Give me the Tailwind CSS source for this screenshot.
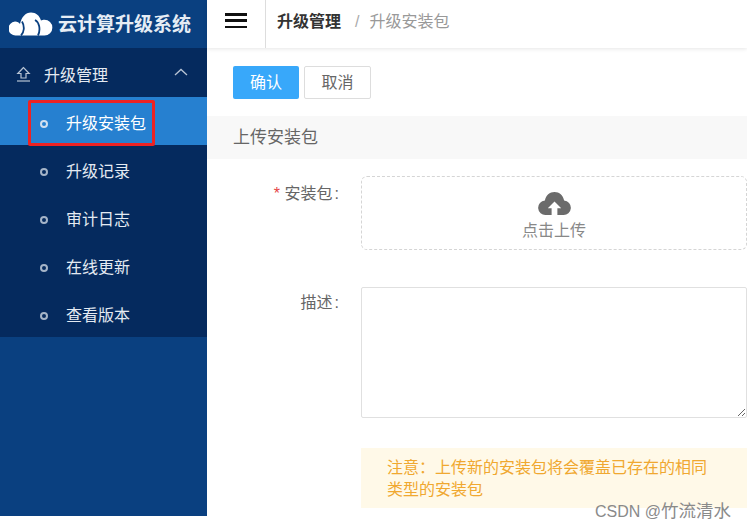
<!DOCTYPE html>
<html lang="zh">
<head>
    <meta charset="UTF-8">
    <title>云计算升级系统</title>
    <script src="https://cdn.jsdelivr.net/npm/@tailwindcss/browser@4"></script>
</head>
<body class="bg-white font-['Liberation_Sans','Noto_Sans_CJK_SC',sans-serif]">
    <div class="relative flex h-[529px] w-[747px] overflow-hidden">
        <!-- sidebar -->
        <aside class="h-[516px] w-[207px] shrink-0 bg-[#0a4080] text-[16px] text-[#e4eaf2]">
            <div class="flex h-[48px] items-center gap-[5px] pl-[9px]">
                <svg width="44" height="24" viewBox="0 0 44 24" fill="#fff">
                    <path d="M7 23.500a7 7 0 0 1-1-14c2.500 0 4 1 5 2.500C12.500 5 16.500.5 22 .5c5 0 8.500 3 10 8 1-.5 2-.7 3.500-.7a7.800 7.800 0 0 1 0 15.700z"/>
                    <path d="M12 23.500c3-3 4-9 1-14M26 8c4 2 6 9 3 15.500" fill="none" stroke="#0a4080" stroke-width="1.800"/>
                </svg>
                <span class="pt-[2px] text-[19px] font-bold text-[#e6edf5]">云计算升级系统</span>
            </div>
            <div class="flex h-[49px] items-center bg-[#052a5e] pl-[16px] pr-[19px] pt-[7px]">
                <svg class="-translate-y-[2px]" width="15" height="16" viewBox="0 0 15 16" fill="none" stroke="#b8c4d4" stroke-width="1.200">
                    <path d="M7.500 1.500 1.800 7.500H5V12h5V7.500h3.200z"/>
                    <path d="M1 15h13"/>
                </svg>
                <span class="ml-[13px]">升级管理</span>
                <svg class="ml-auto -translate-y-[4px]" width="14" height="8" viewBox="0 0 14 8" fill="none" stroke="#b8c4d4" stroke-width="1.300">
                    <path d="M1 7 7 1.500 13 7"/>
                </svg>
            </div>
            <div class="bg-[#052a5e]">
                <div class="relative flex h-[48px] items-center bg-[#2680d0] pl-[40px] pt-[5px] text-white">
                    <span class="size-[8px] rounded-full border-2 border-[#d0dff0]"></span>
                    <span class="ml-[18px]">升级安装包</span>
                    <div class="absolute left-[28px] top-[3px] h-[46px] w-[127px] rounded-[2px] border-[3px] border-[#ee2222]"></div>
                </div>
                <div class="flex h-[48px] items-center pl-[40px] pt-[5px]"><span class="size-[8px] rounded-full border-2 border-[#a5b4c8]"></span><span class="ml-[18px]">升级记录</span></div>
                <div class="flex h-[48px] items-center pl-[40px] pt-[5px]"><span class="size-[8px] rounded-full border-2 border-[#a5b4c8]"></span><span class="ml-[18px]">审计日志</span></div>
                <div class="flex h-[48px] items-center pl-[40px] pt-[5px]"><span class="size-[8px] rounded-full border-2 border-[#a5b4c8]"></span><span class="ml-[18px]">在线更新</span></div>
                <div class="flex h-[48px] items-center pl-[40px] pt-[5px]"><span class="size-[8px] rounded-full border-2 border-[#a5b4c8]"></span><span class="ml-[18px]">查看版本</span></div>
            </div>
        </aside>

        <!-- main -->
        <main class="min-w-0 flex-1 text-[16px] text-[#666]">
            <header class="flex h-[48px] items-center pb-[5px] shadow-[0_1px_4px_rgba(0,0,0,0.1)]">
                <div class="-mb-[5px] flex h-[48px] w-[59px] items-center justify-center border-r border-[#ddd] pb-[7px]">
                    <div class="flex h-[15px] w-[22px] flex-col justify-between">
                        <span class="h-[2.5px] bg-[#111]"></span>
                        <span class="h-[2.5px] bg-[#111]"></span>
                        <span class="h-[2.5px] bg-[#111]"></span>
                    </div>
                </div>
                <span class="ml-[11px] font-bold text-[#333]">升级管理</span>
                <span class="ml-[14px] text-[#aaa]">/</span>
                <span class="ml-[10px] text-[#999]">升级安装包</span>
            </header>
            <div class="flex gap-[5px] pl-[26px] pt-[18px]">
                <button class="h-[33px] w-[66px] rounded-[2px] bg-[#38a8fa] text-white">确认</button>
                <button class="h-[33px] w-[67px] rounded-[2px] border border-[#ddd] text-[#666]">取消</button>
            </div>
            <div class="mt-[17px] flex h-[43px] items-center bg-[#f8f8f8] pl-[26px] text-[17px]">上传安装包</div>
            <div class="mt-[17px] flex">
                <label class="w-[132px] pt-[6px] text-right"><span class="text-[#e54545]">*</span> 安装包<span class="ml-[2px]">:</span></label>
                <div class="ml-[22px] flex h-[74px] w-[386px] flex-col items-center rounded-[6px] border border-dashed border-[#d5d5d5] pt-[14px] text-[#888]">
                    <svg width="33" height="25" viewBox="0 0 34 26" fill="#6b6b6b">
                        <path d="M8 25a7.500 7.500 0 0 1-1-15C8 4.500 12 1 17 1s9 3.500 10 9a7.500 7.500 0 0 1-1 15h-6v-7h4l-7-7-7 7h4v7z"/>
                    </svg>
                    <span class="mt-[3px]">点击上传</span>
                </div>
            </div>
            <div class="mt-[37px] flex">
                <label class="w-[132px] pt-[4px] text-right">描述<span class="ml-[2px]">:</span></label>
                <textarea class="ml-[22px] h-[131px] w-[386px] rounded-[2px] border border-[#e0e0e0] bg-white"></textarea>
            </div>
            <div class="ml-[154px] mt-[30px] h-[60px] w-[386px] bg-[#fff9e8] px-[26px] pt-[9px] leading-[22px] text-[#f0a830]">注意：上传新的安装包将会覆盖已存在的相同类型的安装包</div>
        </main>
        <div class="absolute left-[595px] top-[500px] text-[16px] leading-[22px] text-[#8a8a8a]">CSDN @<span class="text-[17.500px]">竹流清水</span></div>
    </div>
</body>
</html>
